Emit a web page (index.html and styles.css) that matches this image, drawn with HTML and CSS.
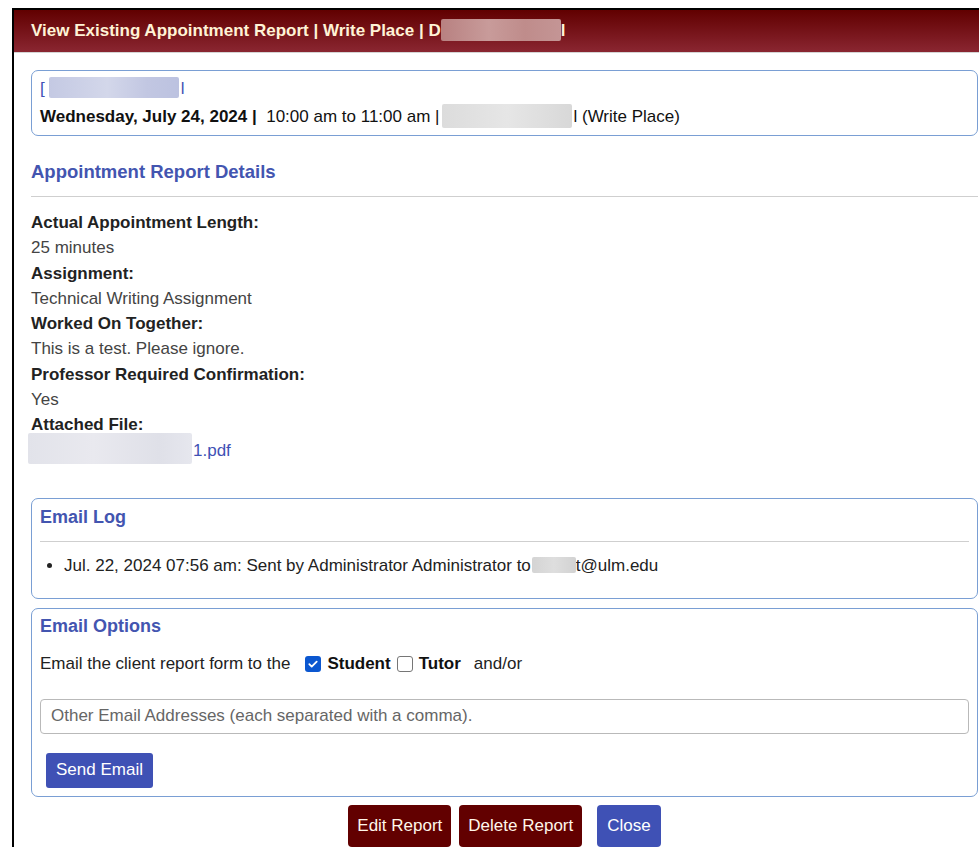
FILE: index.html
```html
<!DOCTYPE html>
<html lang="en">
<head>
<meta charset="utf-8">
<title>View Existing Appointment Report</title>
<link rel="stylesheet" href="styles.css">
</head>
<body>
<div class="dialog">
  <div class="titlebar">View Existing Appointment Report | Write Place | D<span class="redact redact-title"></span>l</div>
  <div class="content">
    <div class="box info">
      <div class="info-line name-link">[<span class="redact redact-name"></span>l</div>
      <div class="info-line"><b>Wednesday, July 24, 2024 |</b>&nbsp; 10:00 am to 11:00 am |<span class="redact redact-tutor"></span>l (Write Place)</div>
    </div>

    <h2 class="section-title">Appointment Report Details</h2>
    <dl class="details">
      <dt>Actual Appointment Length:</dt>
      <dd>25 minutes</dd>
      <dt>Assignment:</dt>
      <dd>Technical Writing Assignment</dd>
      <dt>Worked On Together:</dt>
      <dd>This is a test. Please ignore.</dd>
      <dt>Professor Required Confirmation:</dt>
      <dd>Yes</dd>
      <dt>Attached File:</dt>
      <dd><span class="redact redact-file"></span><a class="file-link" href="#">1.pdf</a></dd>
    </dl>

    <div class="box panel log">
      <h3 class="panel-title ruled">Email Log</h3>
      <ul class="log-list">
        <li>Jul. 22, 2024 07:56 am: Sent by Administrator Administrator to<span class="redact redact-mail"></span>t@ulm.edu</li>
      </ul>
    </div>

    <div class="box panel options">
      <h3 class="panel-title">Email Options</h3>
      <div class="recipients">
        <span class="lead">Email the client report form to the</span>
        <label class="check"><span class="tick checked"><svg viewBox="0 0 16 16" width="16" height="16"><path d="M4.3 8.2l2.4 2.4 5-5" fill="none" stroke="#fff" stroke-width="1.8" stroke-linecap="round" stroke-linejoin="round"/></svg></span><b>Student</b></label>
        <label class="check"><span class="tick"></span><b>Tutor</b></label>
        <span class="andor">and/or</span>
      </div>
      <input class="other-emails" type="text" placeholder="Other Email Addresses (each separated with a comma).">
      <button class="btn btn-blue send" type="button">Send Email</button>
    </div>

    <div class="actions">
      <button class="btn btn-red" type="button">Edit Report</button>
      <button class="btn btn-red" type="button">Delete Report</button>
      <button class="btn btn-blue close" type="button">Close</button>
    </div>
  </div>
</div>
</body>
</html>
```
FILE: styles.css
```css
html, body {
  margin: 0;
  padding: 0;
  background: #fff;
  overflow: hidden;
}

body {
  font-family: "Liberation Sans", Arial, sans-serif;
  font-size: 17px;
  color: #222;
}

.dialog {
  margin: 8px 0 0 12px;
  width: 981px;
  border-left: 2px solid #000;
  border-top: 2px solid #000;
  min-height: 900px;
}

.titlebar {
  height: 42px;
  line-height: 42px;
  padding: 0 17px;
  font-weight: bold;
  font-size: 17px;
  color: #fff3d6;
  background: linear-gradient(#610000, #8a2631);
  border-bottom: 1px solid #d4d4d4;
  white-space: nowrap;
}

.content {
  padding: 0 17px;
}

/* blurred-out personal details */
.redact {
  display: inline-block;
  vertical-align: middle;
  border-radius: 2px;
}

.redact-title {
  width: 120px;
  height: 22px;
  margin-top: -3px;
  background: linear-gradient(90deg, #b88181, #c89b9a 40%, #bf8c8b 70%, #c49595);
  filter: blur(0.6px);
}

.redact-name {
  width: 130px;
  height: 21px;
  margin: -4px 2px 0 4px;
  background: linear-gradient(90deg, #c4c9e3, #d3d7ea 45%, #c2c7e2 75%, #bcc2e0);
  filter: blur(0.6px);
}

.redact-tutor {
  width: 130px;
  height: 24px;
  margin: -3px 1px 0 3px;
  background: linear-gradient(90deg, #dcdcdc, #e6e6e6 50%, #d8d8d8);
  filter: blur(0.6px);
}

.redact-file {
  width: 164px;
  height: 31px;
  margin: -6px 1px 0 -3px;
  background: linear-gradient(90deg, #e2e3ea, #e9e9ef 40%, #dfe0e8 80%, #e6e7ee);
  filter: blur(0.6px);
}

.redact-mail {
  width: 44px;
  height: 16px;
  margin: -3px 0 0 1px;
  background: linear-gradient(90deg, #d4d4d4, #dedede 50%, #d2d2d2);
  filter: blur(0.5px);
}

.box {
  border: 1px solid #7a9fd4;
  border-radius: 7px;
}

.info {
  margin-top: 17px;
  padding: 4px 8px;
  line-height: 28px;
  color: #111;
}

.name-link {
  color: #3f51b5;
}

.section-title {
  margin: 24px 0 0;
  padding-bottom: 12px;
  border-bottom: 1px solid #cfcfcf;
  font-size: 18.5px;
  line-height: 24px;
  font-weight: bold;
  color: #4355b0;
}

.details {
  margin: 13px 0 0;
  line-height: 25.3px;
}

.details dt {
  font-weight: bold;
  color: #222;
}

.details dd {
  margin: 0;
  color: #444;
}

.file-link {
  color: #3f51b5;
  text-decoration: none;
}

.panel {
  padding: 5px 8px 8px;
}

.panel-title {
  margin: 0;
  font-size: 18px;
  line-height: 24px;
  font-weight: bold;
  color: #4355b0;
}

.panel-title.ruled {
  padding-bottom: 12px;
  border-bottom: 1px solid #cfcfcf;
}

.log {
  margin-top: 34px;
  padding-top: 6px;
  padding-bottom: 22px;
}

.log-list {
  margin: 14px 0 0;
  padding-left: 24px;
  line-height: 20px;
  color: #222;
}

.options {
  margin-top: 9px;
}

.recipients {
  margin-top: 16px;
  line-height: 20px;
  display: flex;
  align-items: center;
  color: #222;
}

.recipients .lead {
  margin-right: 15px;
}

.check {
  display: inline-flex;
  align-items: center;
  gap: 6px;
  margin-right: 6px;
  color: #111;
}

.tick {
  width: 14px;
  height: 14px;
  border: 1px solid #767676;
  border-radius: 3px;
  background: #fff;
  display: inline-flex;
  align-items: center;
  justify-content: center;
}

.tick.checked {
  width: 16px;
  height: 16px;
  border: none;
  background: #0b57d0;
}

.tick svg {
  display: block;
}

.andor {
  margin-left: 7px;
}

.other-emails {
  display: block;
  box-sizing: border-box;
  width: 100%;
  height: 35px;
  margin-top: 25px;
  padding: 0 10px;
  border: 1px solid #b9b9b9;
  border-radius: 4px;
  font-family: inherit;
  font-size: 17px;
  color: #222;
  outline: none;
}

.other-emails::placeholder {
  color: #666;
}

.btn {
  font-family: inherit;
  font-size: 17px;
  border: none;
  border-radius: 4px;
  cursor: pointer;
}

.btn-blue {
  background: #3f51b5;
  color: #fff;
}

.btn-red {
  background: #620000;
  color: #fff6ea;
}

.send {
  display: block;
  height: 35px;
  margin: 19px 0 0 6px;
  padding: 0 10px;
  border-radius: 3px;
}

.actions {
  margin-top: 8px;
  display: flex;
  justify-content: center;
  gap: 8px;
}

.actions .btn {
  height: 42px;
  padding: 0 9px;
}

.actions .close {
  margin-left: 7px;
  padding: 0 10px;
}
```
